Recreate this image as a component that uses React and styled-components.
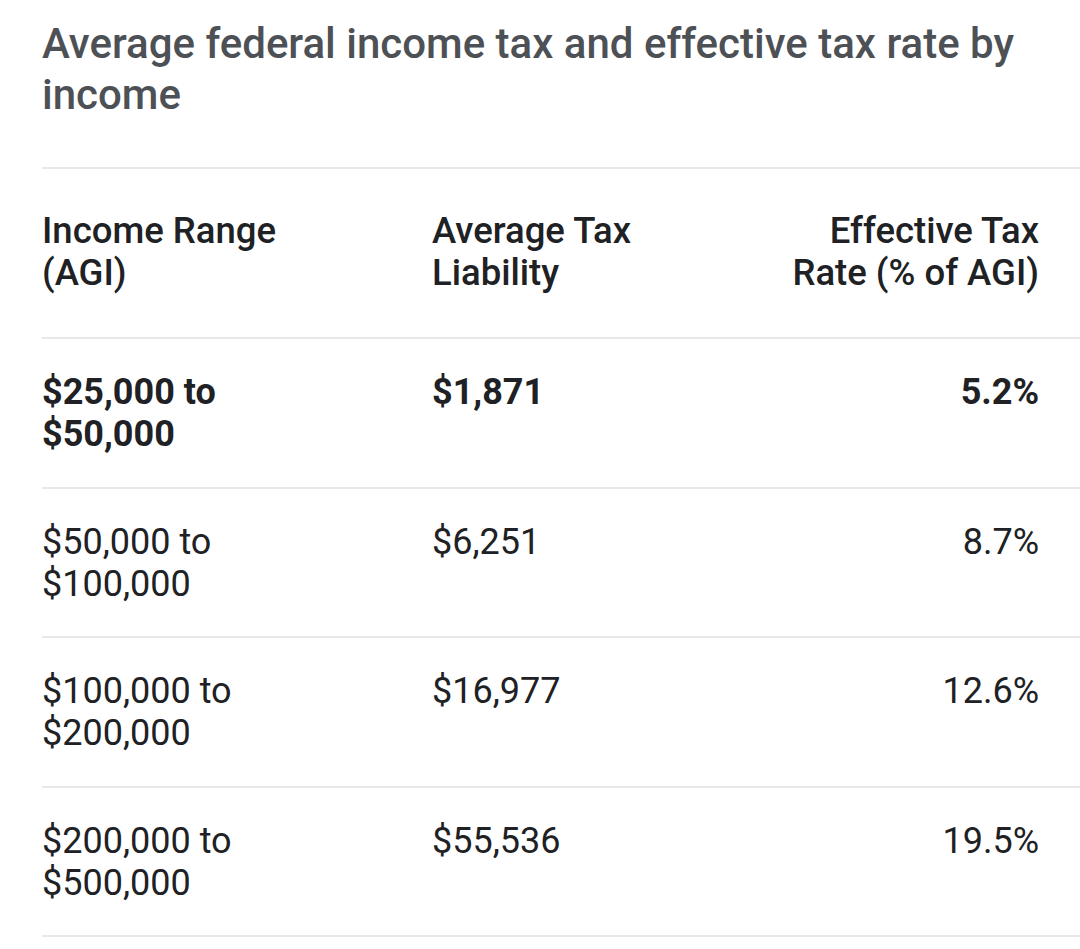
import React from "react";
import styled, { createGlobalStyle } from "styled-components";

const GlobalStyle = createGlobalStyle`
    body {
        margin: 0;
        background: #ffffff;
        font-family: Roboto, "Noto Sans", Arial, sans-serif;
    }
`

const Page = styled.div`
    padding: 18px 0 0 42px;
    overflow: hidden;
`

const Title = styled.h2`
    margin: 0 0 47px 0;
    font-size: 42px;
    line-height: 51px;
    font-weight: 500;
    color: #4d5156;
`

const Table = styled.div`
    display: flex;
    flex-direction: column;
    border-top: 2px solid #e8e8e8;
`

const Row = styled.div`
    display: grid;
    grid-template-columns: 390px 1fr 1fr;
    padding: ${(props) => (props.header ? "41px 41px 43px 0" : "32px 41px 31.5px 0")};
    border-bottom: 2px solid #e8e8e8;
    font-size: ${(props) => (props.header ? "36.5px" : "36px")};
    line-height: 42px;
    font-weight: ${(props) => (props.bold ? 700 : props.header ? 500 : 400)};
    color: #202124;
`

const Cell = styled.div`
    text-align: ${(props) => (props.right ? "right" : "left")};
    white-space: pre-line;
`

const rows = [
    { range: "$25,000 to\n$50,000", tax: "$1,871", rate: "5.2%", bold: true },
    { range: "$50,000 to\n$100,000", tax: "$6,251", rate: "8.7%" },
    { range: "$100,000 to\n$200,000", tax: "$16,977", rate: "12.6%" },
    { range: "$200,000 to\n$500,000", tax: "$55,536", rate: "19.5%" },
]

const App = () => {
    return (
        <Page>
            <GlobalStyle />
            <Title>Average federal income tax and effective tax rate by income</Title>
            <Table>
                <Row header>
                    <Cell>{"Income Range\n(AGI)"}</Cell>
                    <Cell>{"Average Tax\nLiability"}</Cell>
                    <Cell right>{"Effective Tax\nRate (% of AGI)"}</Cell>
                </Row>
                {rows.map((r) => (
                    <Row key={r.range} bold={r.bold}>
                        <Cell>{r.range}</Cell>
                        <Cell>{r.tax}</Cell>
                        <Cell right>{r.rate}</Cell>
                    </Row>
                ))}
            </Table>
        </Page>
    )
}

export default App
